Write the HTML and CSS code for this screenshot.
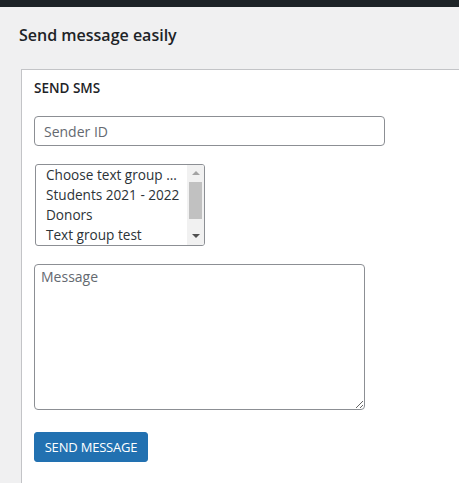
FILE: index.html
```html
<!DOCTYPE html>
<html>
<head>
<meta charset="utf-8">
<link rel="stylesheet" href="styles.css">
</head>
<body>
<div class="adminbar"></div>
<div class="wrap">
  <h1 class="page-title">Send message easily</h1>
  <div class="card">
    <h2 class="card-title">SEND SMS</h2>
    <form class="sms-form">
      <input class="field sender" type="text" placeholder="Sender ID">
      <div class="groups" role="listbox">
        <ul class="group-list">
          <li>Choose text group ...</li>
          <li>Students 2021 - 2022</li>
          <li>Donors</li>
          <li>Text group test</li>
        </ul>
        <div class="scrollbar">
          <span class="arrow up"></span>
          <span class="thumb"></span>
          <span class="arrow down"></span>
        </div>
      </div>
      <textarea class="field message" placeholder="Message"></textarea>
      <button class="send" type="button">SEND MESSAGE</button>
    </form>
  </div>
</div>
</body>
</html>
```

FILE: styles.css
```css
html, body {
  margin: 0;
  padding: 0;
  background: #f0f0f1;
  font-family: "Open Sans", "Noto Sans", sans-serif;
  color: #1d2327;
  height: 100%;
  overflow: hidden;
}
.adminbar {
  height: 7px;
  background: #1d2327;
}
.wrap {
  padding: 0 0 0 21px;
}
.page-title {
  margin: 0 0 0 -2px;
  padding: 16px 0 0 0;
  font-size: 16px;
  font-weight: 600;
  line-height: 24px;
  height: 62px;
  box-sizing: border-box;
}
.card {
  background: #fff;
  border: 1px solid #c3c4c7;
  border-right: none;
  border-bottom: none;
  padding: 8px 0 0 12px;
  height: 414px;
  box-sizing: border-box;
}
.card-title {
  margin: 0;
  font-size: 13.5px;
  font-weight: 600;
  line-height: 20px;
}
.sms-form {
  display: flex;
  flex-direction: column;
  align-items: flex-start;
  padding-top: 18px;
}
.field {
  font-family: inherit;
  font-size: 14px;
  color: #2c3338;
  border: 1px solid #8c8f94;
  border-radius: 4px;
  background: #fff;
  box-sizing: border-box;
  outline: none;
}
.field::placeholder {
  color: #646970;
}
.sender {
  width: 351px;
  height: 30px;
  padding: 0 9px;
}
.groups {
  margin-top: 18px;
  margin-left: 1px;
  width: 170px;
  height: 82px;
  border: 1px solid #8c8f94;
  border-radius: 3px;
  box-sizing: border-box;
  display: flex;
  overflow: hidden;
  background: #fff;
}
.group-list {
  list-style: none;
  margin: 0;
  padding: 0;
  flex: 1;
  font-size: 13.6px;
  color: #2c3338;
}
.group-list li {
  padding-left: 10px;
  line-height: 20px;
  height: 20px;
  white-space: nowrap;
}
.scrollbar {
  width: 17px;
  background: #f1f1f1;
  display: flex;
  flex-direction: column;
  align-items: center;
}
.arrow {
  width: 0;
  height: 0;
  border-left: 4px solid transparent;
  border-right: 4px solid transparent;
}
.arrow.up {
  margin-top: 6px;
  border-bottom: 4px solid #a3a3a3;
}
.arrow.down {
  margin-top: 15px;
  border-top: 4px solid #505050;
}
.thumb {
  margin-top: 7px;
  width: 13px;
  height: 37px;
  background: #c1c1c1;
}
.message {
  margin-top: 18px;
  width: 331px;
  height: 146px;
  padding: 2px 6px;
  resize: both;
}
.send {
  margin-top: 22px;
  background: #2271b1;
  color: #fff;
  border: 1px solid #2271b1;
  border-radius: 3px;
  font-family: inherit;
  font-size: 13px;
  letter-spacing: -0.2px;
  height: 30px;
  width: 114px;
  padding: 0;
  cursor: pointer;
}
```
